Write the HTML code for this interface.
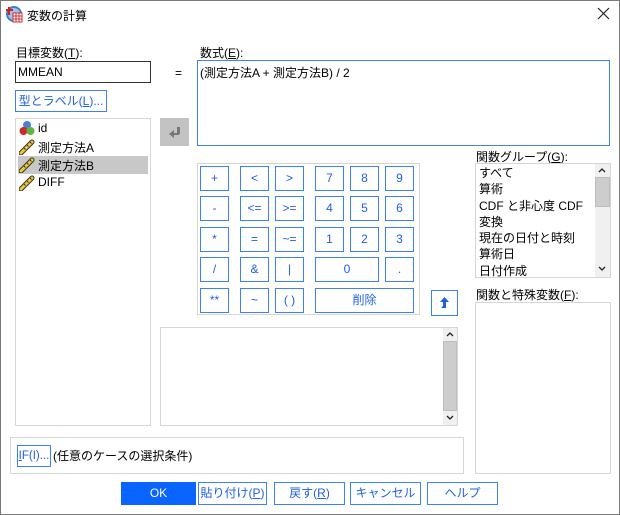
<!DOCTYPE html>
<html><head><meta charset="utf-8"><style>
*{box-sizing:border-box;margin:0;padding:0}
body{width:620px;height:515px;overflow:hidden;background:#fff;font-family:"Liberation Sans","Noto Sans CJK JP",sans-serif;font-size:12px;color:#000;position:relative}
.a{position:absolute}
.win{left:0;top:0;width:620px;height:515px;border:1px solid #7a7a7a}
.btn{position:absolute;border:1.5px solid #3b82f6;background:#fff;color:#1f5fe0;text-align:center;font-size:12px;line-height:21px}
.k{height:25px;line-height:22px;width:29px}
.box{position:absolute;border:1px solid #d6d6d6;background:#fff}
.lbl{position:absolute;font-size:12px;white-space:nowrap}
u{text-decoration:underline}
.sb{position:absolute;background:#f0f0f0}
.thumb{position:absolute;background:#cdcdcd;border:1px solid #bdbdbd}
</style></head><body>
<div class="a win"></div>
<svg class="a" style="left:5px;top:5px" width="18" height="18" viewBox="0 0 18 18">
<circle cx="9" cy="9" r="8" fill="#3b7fc4"/><circle cx="9" cy="9" r="6" fill="#9ec4ea"/>
<rect x="8" y="8" width="9" height="9" fill="#fff" stroke="#d03030"/><path d="M8 11h9M8 14h9M11 8v9M14 8v9" stroke="#d03030" stroke-width="1"/>
<path d="M4 2v8M1 5h7" stroke="#d02020" stroke-width="2"/></svg>
<div class="lbl" style="left:27px;top:7px">変数の計算</div>
<svg class="a" style="left:597px;top:7px" width="13" height="13" viewBox="0 0 13 13"><path d="M1 1L12 12M12 1L1 12" stroke="#222" stroke-width="1.2"/></svg>

<div class="lbl" style="left:16px;top:44px">目標変数(<u>T</u>):</div>
<div class="a" style="left:15px;top:61px;width:136px;height:22px;border:1px solid #333;padding:2px 2px;font-size:12px;line-height:16px">MMEAN</div>
<div class="lbl" style="left:175px;top:66px">=</div>
<div class="lbl" style="left:200px;top:44px">数式(<u>E</u>):</div>
<div class="a" style="left:197px;top:60px;width:413px;height:86px;border:1.5px solid #3b82f6;padding:3px 2px;font-size:12px">(測定方法A + 測定方法B) / 2</div>

<div class="btn" style="left:15px;top:90px;width:92px;height:22px">型とラベル(<u>L</u>)...</div>

<div class="box" style="left:15px;top:118px;width:136px;height:308px"></div>
<div class="a" style="left:18px;top:156px;width:130px;height:18px;background:#c8c8c8"></div>
<svg class="a" style="left:19px;top:120px" width="16" height="16" viewBox="0 0 16 16"><circle cx="8" cy="5" r="4" fill="#4a7fd8"/><circle cx="4.5" cy="11" r="4" fill="#d02828"/><circle cx="11.5" cy="11" r="4" fill="#5cb83c"/></svg>
<div class="lbl" style="left:38px;top:121px">id</div>
<svg width="0" height="0" style="position:absolute"><defs><g id="r"><path d="M2 14L13 3" stroke="#333" stroke-width="5" stroke-linecap="round"/><path d="M2 14L13 3" stroke="#f0c830" stroke-width="3" stroke-linecap="round"/><path d="M5 9l1.5 1.5M8 6l1.5 1.5M11 3l1.5 1.5" stroke="#333" stroke-width="1"/></g></defs></svg>
<svg class="a" style="left:19px;top:139px" width="16" height="16"><use href="#r"/></svg>
<svg class="a" style="left:19px;top:157px" width="16" height="16"><use href="#r"/></svg>
<svg class="a" style="left:19px;top:175px" width="16" height="16"><use href="#r"/></svg>
<div class="lbl" style="left:38px;top:139px">測定方法A</div>
<div class="lbl" style="left:38px;top:157px">測定方法B</div>
<div class="lbl" style="left:38px;top:175px">DIFF</div>

<div class="a" style="left:160px;top:118px;width:29px;height:28px;background:#c3c3c3"></div>
<svg class="a" style="left:166px;top:124px" width="16" height="16" viewBox="0 0 16 16"><path d="M11 3h3v6c0 1-1 2-2 2H8v3L3 10l5-4v3h3z" fill="#777"/></svg>

<div class="box" style="left:197px;top:163px;width:223px;height:152px"></div>
<div class="btn k" style="left:200px;top:166px">+</div>
<div class="btn k" style="left:240px;top:166px">&lt;</div>
<div class="btn k" style="left:275px;top:166px">&gt;</div>
<div class="btn k" style="left:315px;top:166px">7</div>
<div class="btn k" style="left:350px;top:166px">8</div>
<div class="btn k" style="left:385px;top:166px">9</div>
<div class="btn k" style="left:200px;top:196px">-</div>
<div class="btn k" style="left:240px;top:196px">&lt;=</div>
<div class="btn k" style="left:275px;top:196px">&gt;=</div>
<div class="btn k" style="left:315px;top:196px">4</div>
<div class="btn k" style="left:350px;top:196px">5</div>
<div class="btn k" style="left:385px;top:196px">6</div>
<div class="btn k" style="left:200px;top:227px">*</div>
<div class="btn k" style="left:240px;top:227px">=</div>
<div class="btn k" style="left:275px;top:227px">~=</div>
<div class="btn k" style="left:315px;top:227px">1</div>
<div class="btn k" style="left:350px;top:227px">2</div>
<div class="btn k" style="left:385px;top:227px">3</div>
<div class="btn k" style="left:200px;top:257px">/</div>
<div class="btn k" style="left:240px;top:257px">&amp;</div>
<div class="btn k" style="left:275px;top:257px">|</div>
<div class="btn k" style="left:315px;top:257px;width:64px">0</div>
<div class="btn k" style="left:385px;top:257px">.</div>
<div class="btn k" style="left:200px;top:288px">**</div>
<div class="btn k" style="left:240px;top:288px">~</div>
<div class="btn k" style="left:275px;top:288px">( )</div>
<div class="btn k" style="left:315px;top:288px;width:99px">削除</div>
<div class="btn" style="left:431px;top:290px;width:27px;height:26px"></div>
<svg class="a" style="left:437px;top:295px" width="15" height="15" viewBox="0 0 15 15"><path d="M7.5 2L3 7h3v4l-2 2h5V7h3z" fill="#1f5fe0"/></svg>

<div class="box" style="left:160px;top:327px;width:298px;height:99px"></div>
<div class="sb" style="left:443px;top:328px;width:14px;height:97px"></div>
<div class="thumb" style="left:443px;top:341px;width:14px;height:70px"></div>
<svg class="a" style="left:446px;top:331px" width="8" height="6"><path d="M1 5L4 2L7 5" stroke="#222" stroke-width="1.3" fill="none"/></svg>
<svg class="a" style="left:446px;top:415px" width="8" height="6"><path d="M1 1L4 4L7 1" stroke="#222" stroke-width="1.3" fill="none"/></svg>

<div class="lbl" style="left:476px;top:148px">関数グループ(<u>G</u>):</div>
<div class="box" style="left:475px;top:163px;width:136px;height:115px;font-size:12px;line-height:16.3px;padding:1px 3px">すべて<br>算術<br>CDF と非心度 CDF<br>変換<br>現在の日付と時刻<br>算術日<br>日付作成</div>
<div class="sb" style="left:595px;top:164px;width:15px;height:113px"></div>
<div class="thumb" style="left:595px;top:177px;width:15px;height:30px"></div>
<svg class="a" style="left:598px;top:167px" width="8" height="6"><path d="M1 5L4 2L7 5" stroke="#222" stroke-width="1.3" fill="none"/></svg>
<svg class="a" style="left:598px;top:266px" width="8" height="6"><path d="M1 1L4 4L7 1" stroke="#222" stroke-width="1.3" fill="none"/></svg>

<div class="lbl" style="left:476px;top:286px">関数と特殊変数(<u>F</u>):</div>
<div class="box" style="left:475px;top:302px;width:136px;height:172px"></div>

<div class="box" style="left:10px;top:437px;width:454px;height:37px"></div>
<div class="btn" style="left:17px;top:445px;width:34px;height:22px;font-size:11.5px"><u>I</u>F(I)...</div>
<div class="lbl" style="left:53px;top:447px">(任意のケースの選択条件)</div>

<div class="btn" style="left:121px;top:482px;width:75px;height:23px;background:#0a64ff;border-color:#0a64ff;color:#fff">OK</div>
<div class="btn" style="left:198px;top:482px;width:69px;height:23px">貼り付け(<u>P</u>)</div>
<div class="btn" style="left:274px;top:482px;width:71px;height:23px">戻す(<u>R</u>)</div>
<div class="btn" style="left:350px;top:482px;width:71px;height:23px">キャンセル</div>
<div class="btn" style="left:427px;top:482px;width:71px;height:23px">ヘルプ</div>
</body></html>
